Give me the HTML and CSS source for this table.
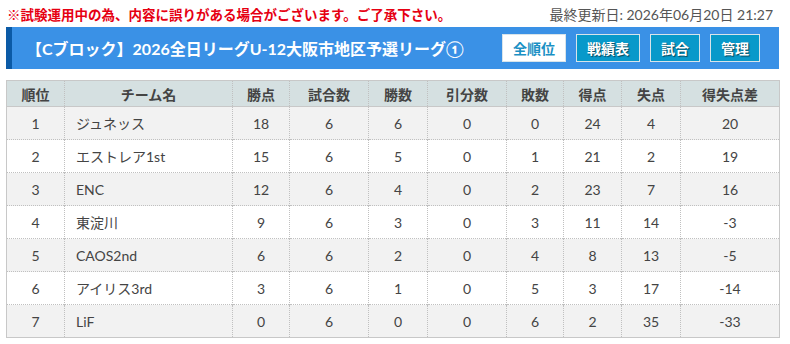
FILE: index.html
```html
<!DOCTYPE html>
<html lang="ja">
<head>
<meta charset="utf-8">
<link rel="stylesheet" href="styles.css">
</head>
<body>
<div class="page">
  <div class="topline">
    <span class="warn">※試験運用中の為、内容に誤りがある場合がございます。ご了承下さい。</span>
    <span class="updated">最終更新日: 2026年06月20日 21:27</span>
  </div>
  <div class="titlebar">
    <h1 class="title">【Cブロック】2026全日リーグU-12大阪市地区予選リーグ①</h1>
    <div class="btns">
      <a class="btn active">全順位</a>
      <a class="btn">戦績表</a>
      <a class="btn">試合</a>
      <a class="btn">管理</a>
    </div>
  </div>
  <table class="standings">
    <colgroup>
      <col style="width:58px"><col style="width:168px"><col style="width:57px"><col style="width:79px"><col style="width:59px"><col style="width:79px"><col style="width:57px"><col style="width:58px"><col style="width:59px"><col style="width:99px">
    </colgroup>
    <thead>
      <tr><th>順位</th><th>チーム名</th><th>勝点</th><th>試合数</th><th>勝数</th><th>引分数</th><th>敗数</th><th>得点</th><th>失点</th><th>得失点差</th></tr>
    </thead>
    <tbody>
      <tr><td>1</td><td class="name">ジュネッス</td><td>18</td><td>6</td><td>6</td><td>0</td><td>0</td><td>24</td><td>4</td><td>20</td></tr>
      <tr><td>2</td><td class="name">エストレア1st</td><td>15</td><td>6</td><td>5</td><td>0</td><td>1</td><td>21</td><td>2</td><td>19</td></tr>
      <tr><td>3</td><td class="name">ENC</td><td>12</td><td>6</td><td>4</td><td>0</td><td>2</td><td>23</td><td>7</td><td>16</td></tr>
      <tr><td>4</td><td class="name">東淀川</td><td>9</td><td>6</td><td>3</td><td>0</td><td>3</td><td>11</td><td>14</td><td>-3</td></tr>
      <tr><td>5</td><td class="name">CAOS2nd</td><td>6</td><td>6</td><td>2</td><td>0</td><td>4</td><td>8</td><td>13</td><td>-5</td></tr>
      <tr><td>6</td><td class="name">アイリス3rd</td><td>3</td><td>6</td><td>1</td><td>0</td><td>5</td><td>3</td><td>17</td><td>-14</td></tr>
      <tr><td>7</td><td class="name">LiF</td><td>0</td><td>6</td><td>0</td><td>0</td><td>6</td><td>2</td><td>35</td><td>-33</td></tr>
    </tbody>
  </table>
</div>
</body>
</html>
```

FILE: styles.css
```css
html, body {
  margin: 0;
  padding: 0;
  background: #fff;
}
body {
  font-family: Lato, "Noto Sans CJK JP", sans-serif;
  color: #444;
}
.page {
  width: 773px;
  margin-left: 6px;
}
.topline {
  display: flex;
  justify-content: space-between;
  align-items: center;
  height: 27px;
  padding: 0 6px 0 1px;
  white-space: nowrap;
}
.warn {
  color: #e60012;
  font-weight: bold;
  font-size: 13.5px;
  font-family: "Noto Sans CJK JP", sans-serif;
}
.updated {
  color: #555;
  font-size: 14px;
}
.titlebar {
  display: flex;
  align-items: center;
  justify-content: space-between;
  height: 42px;
  background: #3a91e6;
  border-left: 6px solid #0b5aa6;
  padding: 0 19px 0 14px;
  white-space: nowrap;
}
.title {
  margin: 0;
  color: #fff;
  font-size: 16px;
  font-weight: bold;
  font-family: Lato, "Noto Sans CJK JP", sans-serif;
  white-space: nowrap;
}
.btns {
  display: flex;
  gap: 10px;
  flex-shrink: 0;
}
.btn {
  display: flex;
  align-items: center;
  justify-content: center;
  height: 26px;
  padding: 0 10px;
  background: #0899ca;
  border: 1px solid #d8e4ea;
  color: #fff;
  font-size: 14px;
  font-weight: bold;
  font-family: "Noto Sans CJK JP", sans-serif;
  text-shadow: 1px 1px 1px rgba(0, 0, 0, 0.55);
  white-space: nowrap;
}
.btn.active {
  background: #fff;
  color: #1a90c4;
  text-shadow: none;
}
.standings {
  margin-top: 11px;
  width: 773px;
  border-collapse: collapse;
  table-layout: fixed;
  border: 1px solid #c8c8c8;
  font-size: 14px;
}
.standings th {
  background: #d5e0e1;
  color: #444;
  font-weight: bold;
  height: 25px;
  padding: 0;
  font-family: "Noto Sans CJK JP", sans-serif;
  font-size: 14px;
  border-left: 1px dotted #c0c0c0;
  border-bottom: 1px solid #c8c8c8;
}
.standings td {
  height: 32px;
  padding: 0;
  text-align: center;
  border-left: 1px dotted #c0c0c0;
  border-top: 1px dotted #c0c0c0;
  color: #444;
}
.standings tbody tr:first-child td {
  border-top: none;
}
.standings tbody tr:nth-child(odd) td {
  background: #f2f2f2;
}
.standings tbody tr:nth-child(even) td {
  background: #fff;
}
.standings td.name {
  text-align: left;
  padding-left: 11px;
}
.standings tbody tr:last-child td {
  border-bottom: 1px dotted #c0c0c0;
}
```
